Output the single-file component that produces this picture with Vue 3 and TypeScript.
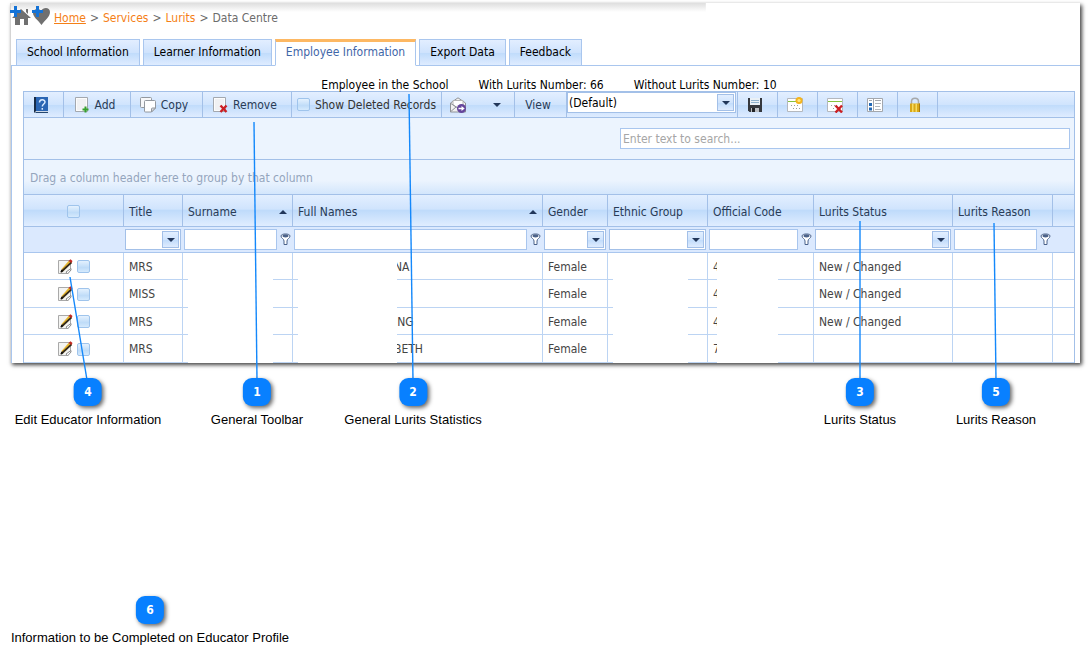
<script setup lang="ts">
import { ref } from 'vue'

interface Column {
  key: string
  label: string
  filter: 'text' | 'list' | 'none'
  sorted?: boolean
}
interface Employee {
  title: string
  nameTail: string
  gender: string
  code: string
  status: string
}
interface Callout {
  n: number
  label: string
  x: number
  y: number
  line?: [number, number, number, number]
}

const tabs = ['School Information', 'Learner Information', 'Employee Information', 'Export Data', 'Feedback']
const activeTab = ref('Employee Information')

const columns: Column[] = [
  { key: 'title', label: 'Title', filter: 'list' },
  { key: 'surname', label: 'Surname', filter: 'text', sorted: true },
  { key: 'names', label: 'Full Names', filter: 'text', sorted: true },
  { key: 'gender', label: 'Gender', filter: 'list' },
  { key: 'ethnic', label: 'Ethnic Group', filter: 'list' },
  { key: 'code', label: 'Official Code', filter: 'text' },
  { key: 'status', label: 'Lurits Status', filter: 'list' },
  { key: 'reason', label: 'Lurits Reason', filter: 'text' },
  { key: 'rest', label: '', filter: 'none' },
]

const employees: Employee[] = [
  { title: 'MRS', nameTail: 'NA', gender: 'Female', code: '4', status: 'New / Changed' },
  { title: 'MISS', nameTail: '', gender: 'Female', code: '4', status: 'New / Changed' },
  { title: 'MRS', nameTail: 'ING', gender: 'Female', code: '4', status: 'New / Changed' },
  { title: 'MRS', nameTail: 'BETH', gender: 'Female', code: '7', status: '' },
]

const callouts: Callout[] = [
  { n: 4, label: 'Edit Educator Information', x: 88, y: 378, line: [70, 277, 87, 380] },
  { n: 1, label: 'General Toolbar', x: 257, y: 378, line: [254, 122, 257, 380] },
  { n: 2, label: 'General Lurits Statistics', x: 413, y: 378, line: [409, 94, 413, 380] },
  { n: 3, label: 'Lurits Status', x: 860, y: 378, line: [860, 221, 860, 380] },
  { n: 5, label: 'Lurits Reason', x: 996, y: 378, line: [994, 223, 996, 380] },
  { n: 6, label: 'Information to be Completed on Educator Profile', x: 150, y: 596 },
]

const search = ref('')
const showDeleted = ref(false)
</script>

<template>
  <main class="page">
    <section class="frame">
      <nav class="crumbs" aria-label="Breadcrumb">
        <svg class="crumb-icon" width="22" height="21" viewBox="0 0 22 21" aria-hidden="true">
          <path d="M11 4 L21 13 H18 V20 H14 V14 H10 V20 H5 V13 H2 Z" fill="#707070" />
          <path d="M16 4h2v5l-2-2z" fill="#707070" />
          <path d="M4 1h3v4h4v3h-4v4h-3v-4h-4v-3h4z" fill="#1573d6" />
        </svg>
        <svg class="crumb-icon" width="20" height="21" viewBox="0 0 20 21" aria-hidden="true">
          <path d="M10 6 C12 2 19 2 19 7 C19 12 14 15 10.500 20 C7 15 2 12 2 8 C2 3 9 3 10 6Z" fill="#707070" />
          <path d="M5 1h3v4h4v3h-4v4h-3v-4h-4v-3h4z" fill="#1573d6" />
        </svg>
        <ol>
          <li><a class="home" href="#home">Home</a></li>
          <li><a href="#services">Services</a></li>
          <li><a href="#lurits">Lurits</a></li>
          <li>Data Centre</li>
        </ol>
      </nav>

      <div class="tabs" role="tablist">
        <button
          v-for="t in tabs"
          :key="t"
          type="button"
          role="tab"
          class="tab"
          :class="{ active: t === activeTab }"
          :aria-selected="t === activeTab"
          @click="activeTab = t"
        >{{ t }}</button>
      </div>

      <div class="pane">
        <div class="stats">
          <span>Employee in the School</span>
          <span>With Lurits Number: 66</span>
          <span>Without Lurits Number: 10</span>
        </div>

        <div class="grid">
          <div class="toolbar" role="toolbar" aria-label="General">
            <button type="button" class="tool w-icon" aria-label="Help">
              <svg width="16" height="16" viewBox="0 0 16 16">
                <path d="M1 0h14v15H1z" fill="#2b66b4" />
                <path d="M1 0h2v16H1z" fill="#182c48" />
                <path d="M3 14h12v2H1l2-2z" fill="#cfd9e6" />
                <path d="M3 15h12v1H2z" fill="#24466f" />
                <path d="M6.500 5.500c0-3.500 5.500-3.500 5.500-.5 0 2-2.700 2-2.700 4.500M9.300 11v1.800" fill="none" stroke="#dcecff" stroke-width="1.500" />
              </svg>
            </button>
            <button type="button" class="tool w-add">
              <svg width="16" height="16" viewBox="0 0 16 16" aria-hidden="true">
                <path d="M1.500 .5h12v14h-12z" fill="#fcfcfc" stroke="#a3a8af" />
                <path d="M3 2h9v11H3z" fill="#f0f1f3" />
                <path d="M10.500 9.500h2v2h2v2h-2v2h-2v-2h-2v-2h2z" fill="#35a02c" />
              </svg>
              <span>Add</span>
            </button>
            <button type="button" class="tool w-copy">
              <svg width="16" height="16" viewBox="0 0 16 16" aria-hidden="true">
                <path d="M1.500 .5h9q1 0 1 1v9h-10q-1 0-1-1v-8q0-1 1-1z" fill="#f7f8fa" stroke="#93989f" />
                <path d="M5.500 3.500h9q1 0 1 1V11l-4 4h-6q-1 0-1-1V4.500q0-1 1-1z" fill="#fff" stroke="#93989f" />
                <path d="M15.500 11h-3q-1 0-1 1v3z" fill="#d7dade" stroke="#93989f" />
              </svg>
              <span>Copy</span>
            </button>
            <button type="button" class="tool w-remove">
              <svg width="16" height="16" viewBox="0 0 16 16" aria-hidden="true">
                <path d="M1.500 .5h12v14h-12z" fill="#fcfcfc" stroke="#a3a8af" />
                <path d="M3 2h9v11H3z" fill="#f0f1f3" />
                <path d="M8.500 8.500l6 6.500M14.500 8.500l-6 6.500" stroke="#cb1f24" stroke-width="2.400" />
              </svg>
              <span>Remove</span>
            </button>
            <label class="tool w-show">
              <input v-model="showDeleted" type="checkbox" class="check" />
              <span>Show Deleted Records</span>
            </label>
            <button type="button" class="tool w-mail" aria-label="Export">
              <svg width="16" height="16" viewBox="0 0 16 16">
                <path d="M.5 6L8 .8 15.500 6v9H.5z" fill="#f1f1f1" stroke="#8e9196" />
                <path d="M3 3.500h10V9L8 11 3 8z" fill="#fff" stroke="#b5b5b5" />
                <path d="M.8 6.500L8 11M.8 14.500L6 10" stroke="#8e9196" fill="none" />
                <circle cx="11.500" cy="11.500" r="4.500" fill="#65459c" />
                <path d="M8.500 10.800h3V9l3.200 2.500-3.200 2.500v-1.700h-3z" fill="#fff" />
              </svg>
              <i class="caret"></i>
            </button>
            <label class="tool w-view" for="view-select">View</label>
            <div class="view-box">
              <span class="combo">
                <select id="view-select"><option>(Default)</option></select>
                <span class="drop"><i class="caret"></i></span>
              </span>
            </div>
            <button type="button" class="tool w-icon" aria-label="Save">
              <svg width="16" height="16" viewBox="0 0 16 16">
                <path d="M1 1h14v14H2.500L1 13.500z" fill="#35383e" />
                <path d="M3 1h10v7H3z" fill="#e9f0f6" />
                <path d="M4 3.500h8M4 5.500h8" stroke="#8fb1cc" />
                <path d="M4 11h8v4H4z" fill="#b9bdc2" />
                <path d="M5 11h3v4H5z" fill="#202226" />
              </svg>
            </button>
            <button type="button" class="tool w-icon" aria-label="New view">
              <svg width="16" height="16" viewBox="0 0 16 16">
                <path d="M.5 1.500h15v13H.5z" fill="#fff" stroke="#b4b8be" />
                <path d="M1 4.500h14" stroke="#86c440" />
                <path d="M4 8.500h9M6 11.500h7" stroke="#9a9da2" stroke-dasharray="1 2" />
                <circle cx="12" cy="3.500" r="3.500" fill="#f4b41d" />
                <circle cx="12" cy="3.500" r="1.600" fill="#ffe680" />
              </svg>
            </button>
            <button type="button" class="tool w-icon" aria-label="Delete view">
              <svg width="16" height="16" viewBox="0 0 16 16">
                <path d="M.5 1.500h15v13H.5z" fill="#fff" stroke="#b4b8be" />
                <path d="M1 4.500h14" stroke="#86c440" />
                <path d="M4 8.500h6M6 11.500h3" stroke="#9a9da2" stroke-dasharray="1 2" />
                <path d="M8.500 8.500l6.500 7M15 8.500l-6.500 7" stroke="#cb1f24" stroke-width="2.400" />
              </svg>
            </button>
            <button type="button" class="tool w-icon" aria-label="Choose columns">
              <svg width="16" height="16" viewBox="0 0 16 16">
                <path d="M.5 1.500h15v13H.5z" fill="#fff" stroke="#a3a7ad" />
                <path d="M6.500 2v12M2 3.500h3M8 3.500h6" stroke="#a3a7ad" />
                <path d="M2 6h3v3H2zM2 10.500h3v3H2z" fill="#2268b5" />
                <path d="M8 6.500h6M8 9.500h5M8 12.500h6" stroke="#b3b7bd" />
              </svg>
            </button>
            <button type="button" class="tool w-icon" aria-label="Lock">
              <svg width="16" height="16" viewBox="0 0 16 16">
                <path d="M4.500 7V4.500c0-4.500 7-4.500 7 0V7" fill="none" stroke="#a7a9ab" stroke-width="1.500" />
                <path d="M3 6.500h10V15H3z" fill="#d9a818" />
                <path d="M5 6.500h1.500V15H5zM8.500 6.500H10V15H8.500z" fill="#f6dc62" />
                <path d="M12 6.500h1V15h-1z" fill="#a97b0b" />
              </svg>
            </button>
          </div>

          <div class="search">
            <input v-model="search" type="text" placeholder="Enter text to search..." aria-label="Search" />
          </div>
          <div class="group">Drag a column header here to group by that column</div>

          <table>
            <colgroup>
              <col class="c-select" />
              <col v-for="c in columns" :key="c.key" :class="'c-' + c.key" />
            </colgroup>
            <thead>
              <tr class="head">
                <th class="pick"><span class="row-tools"><input type="checkbox" class="check" aria-label="Select all" /></span></th>
                <th v-for="c in columns" :key="c.key" scope="col">
                  <span class="th">{{ c.label }}<i v-if="c.sorted" class="sort"></i></span>
                </th>
              </tr>
              <tr class="filters">
                <td></td>
                <td v-for="c in columns" :key="c.key">
                  <span v-if="c.filter === 'list'" class="combo">
                    <select :aria-label="'Filter ' + c.label"><option></option></select>
                    <span class="drop"><i class="caret"></i></span>
                  </span>
                  <span v-else-if="c.filter === 'text'" class="text-filter">
                    <input type="text" :aria-label="'Filter ' + c.label" />
                    <svg width="15" height="14" viewBox="0 0 15 14" aria-hidden="true">
                      <path d="M4 3C4 .3 13 .3 13 3 13 5.500 10 5.500 10 8v3.500H7V8C7 5.500 4 5.500 4 3z" fill="#fff" stroke="#4b628a" />
                      <ellipse cx="8.500" cy="2.800" rx="3" ry="1.600" fill="#4b628a" />
                    </svg>
                  </span>
                </td>
              </tr>
            </thead>
            <tbody>
              <tr v-for="(e, i) in employees" :key="i">
                <td>
                  <span class="row-tools">
                    <button type="button" class="edit" aria-label="Edit">
                      <svg width="16" height="16" viewBox="0 0 16 16">
                        <path d="M.5 1.500h12V11L9 14.500H.5z" fill="#f4f4f2" stroke="#a9a9a9" />
                        <path d="M13 9.500v1.500l-3.500 4-1.500-2z" fill="#fff" stroke="#8b8b8b" />
                        <path d="M3 13L4 9.500 11 1.500 13.500 3.500 6 11.500z" fill="#e6b631" />
                        <path d="M3 13L13.500 3.300" stroke="#33291a" stroke-width="1.800" />
                        <path d="M10.500 2L12.500 .3 14.500 2 13.500 4z" fill="#c22a22" />
                        <path d="M2.500 13.500l1-3 2 1.500z" fill="#111" />
                      </svg>
                    </button>
                    <input type="checkbox" class="check" :aria-label="'Select row ' + (i + 1)" />
                  </span>
                </td>
                <td>{{ e.title }}</td>
                <td class="masked m-surname"></td>
                <td class="masked m-names"><span class="tail">{{ e.nameTail }}</span></td>
                <td>{{ e.gender }}</td>
                <td class="masked m-ethnic"></td>
                <td class="masked m-code">{{ e.code }}</td>
                <td>{{ e.status }}</td>
                <td></td>
                <td></td>
              </tr>
            </tbody>
          </table>
        </div>
      </div>
    </section>

    <svg class="lines" aria-hidden="true">
      <template v-for="c in callouts" :key="c.n">
        <line v-if="c.line" :x1="c.line[0]" :y1="c.line[1]" :x2="c.line[2]" :y2="c.line[3]" />
      </template>
    </svg>
    <div v-for="c in callouts" :key="c.n" class="callout" :style="{ left: c.x + 'px', top: c.y + 'px' }">
      <b>{{ c.n }}</b>
      <span>{{ c.label }}</span>
    </div>
  </main>
</template>

<style>
body {
  margin: 0;
  background: #fff;
}
</style>

<style scoped>
* {
  box-sizing: border-box;
}
.page {
  position: relative;
  min-height: 100vh;
  padding: 3px 8px 0 10px;
  overflow: hidden;
  font: 12px/16px "DejaVu Sans Condensed", "Noto Sans", sans-serif;
  color: #000;
}
button,
input,
select {
  font: inherit;
  color: inherit;
  margin: 0;
  border-radius: 0;
}
.frame {
  border-left: 1px solid #d4d4d4;
  background: #fff;
  box-shadow: 2px 2px 4px rgba(0, 0, 0, 0.75);
}
.crumbs {
  display: flex;
  height: 36px;
  color: #6c6c6c;
  background: linear-gradient(#dedede, rgba(255, 255, 255, 0) 9px) no-repeat 0 0 / 65% 100%;
}
.crumb-icon {
  margin: 2px 0 0 -1px;
}
.crumbs ol {
  display: flex;
  margin: 7px 0 0 3px;
  padding: 0;
  list-style: none;
}
.crumbs li + li::before {
  content: ">";
  margin: 0 4px;
}
.crumbs a {
  color: #f57f17;
  text-decoration: none;
}
.crumbs a.home {
  text-decoration: underline;
}
.tabs {
  display: flex;
  gap: 3px;
  height: 27px;
  margin: 0 0 -1px 5px;
  position: relative;
}
.tab {
  height: 27px;
  padding: 0 10px 2px;
  border: 1px solid #a9c6ee;
  background: linear-gradient(#e2eeff, #cfe3fd 50%, #bfdbfb 51%, #dfecff);
  white-space: nowrap;
}
.tab.active {
  border-top: 3px solid #fdb863;
  border-bottom-color: #fff;
  padding-bottom: 3px;
  background: #fff;
  color: #3f66a8;
}
.pane {
  padding: 12px 5px 0 11px;
  border: solid #a9c6ee;
  border-width: 1px 0 0 1px;
}
.stats {
  display: flex;
  justify-content: center;
  gap: 30px;
  height: 13px;
  line-height: 15px;
}
.grid {
  border: 1px solid #a3c0e8;
  border-bottom: 0;
}
.toolbar {
  display: flex;
  height: 26px;
  border-bottom: 1px solid #a3c0e8;
  background: linear-gradient(#e3efff, #d0e4fd 50%, #bfdbfb 51%, #dfecff);
  color: #283b56;
}
.tool {
  display: flex;
  align-items: center;
  justify-content: center;
  gap: 5px;
  flex: none;
  padding: 0 5px 0 0;
  border: 0;
  border-right: 1px solid #a3c0e8;
  background: none;
  white-space: nowrap;
}
.tool svg {
  flex: none;
}
.w-icon {
  width: 40px;
}
.w-add {
  width: 67px;
}
.w-copy {
  width: 72px;
}
.w-remove {
  width: 89px;
}
.w-show {
  width: 150px;
  padding: 0;
  color: #333;
}
.w-mail {
  width: 73px;
  gap: 27px;
}
.w-view {
  width: 52px;
}
.view-box {
  width: 171px;
  padding-right: 1px;
  border-right: 1px solid #a3c0e8;
}
.combo {
  display: flex;
  position: relative;
  height: 21px;
  border: 1px solid #a3c0e8;
  background: #fff;
}
.combo select {
  appearance: none;
  flex: 1;
  min-width: 0;
  padding: 1px 20px 0 1px;
  border: 0;
  background: none;
  color: #000;
}
.drop {
  position: absolute;
  top: 1px;
  right: 1px;
  bottom: 1px;
  display: grid;
  place-items: center;
  width: 17px;
  border: 1px solid #a3c0e8;
  background: linear-gradient(#e3efff, #d0e4fd 50%, #bfdbfb 51%, #dfecff);
  pointer-events: none;
}
.caret {
  border: 4px solid transparent;
  border-top-color: #22375a;
  border-bottom: 0;
}
.check {
  appearance: none;
  flex: none;
  width: 13px;
  height: 13px;
  border: 1px solid #9fc4ec;
  border-radius: 2px;
  background: linear-gradient(#e4f1fe, #bfdcf8 60%, #d5eafd);
}
.search {
  display: flex;
  justify-content: flex-end;
  padding: 10px 4px;
  border-bottom: 1px solid #a3c0e8;
  background: #ecf4fe;
}
.search input {
  width: 450px;
  height: 21px;
  padding: 1px 2px 0;
  border: 1px solid #a9c6ee;
  background: #fff;
}
.search input::placeholder {
  color: #a6a6a6;
  opacity: 1;
}
.group {
  height: 34px;
  padding: 10px 6px 8px;
  background: linear-gradient(#ecf4fe 60%, #d3e6fc);
  color: #94a5bd;
}
table {
  width: 100%;
  table-layout: fixed;
  border-spacing: 0;
  color: #444;
}
.c-select { width: 100px; }
.c-title { width: 59px; }
.c-surname { width: 110px; }
.c-gender { width: 65px; }
.c-ethnic { width: 100px; }
.c-code { width: 106px; }
.c-status { width: 139px; }
.c-reason { width: 100px; }
.c-rest { width: 21px; }
th,
td {
  position: relative;
  height: 27px;
  padding: 1px 5px 0;
  border-right: 1px solid #bcd4f3;
  border-bottom: 1px solid #bcd4f3;
  font-weight: normal;
  text-align: left;
  white-space: nowrap;
}
tbody tr:nth-child(even) td {
  height: 28px;
}
th:last-child,
td:last-child {
  border-right: 0;
}
.head th {
  height: 33px;
  padding: 2px 5px 0;
  border: solid #a3c0e8;
  border-width: 1px 1px 1px 0;
  background: linear-gradient(#e3efff, #d0e4fd 45%, #bfdbfb 50%, #e0edff);
  color: #283b56;
}
.head th:last-child {
  border-right: 0;
}
.th {
  display: flex;
  align-items: center;
  justify-content: space-between;
}
.sort {
  border: 4px solid transparent;
  border-bottom-color: #22375a;
  border-top: 0;
}
.filters td {
  height: 26px;
  padding: 0 1px;
  border-right: 0;
  border-bottom-color: #a9c6ee;
  background: #dbe9fe;
}
.filters .combo {
  margin-right: 1px;
}
.text-filter {
  display: flex;
  align-items: center;
}
.text-filter input {
  flex: 1;
  min-width: 0;
  height: 21px;
  padding: 0 2px;
  border: 1px solid #a9c6ee;
  background: #fff;
}
.row-tools {
  display: flex;
  align-items: center;
  justify-content: center;
  gap: 3px;
}
.edit {
  display: flex;
  padding: 0;
  border: 0;
  background: none;
}
.masked::after {
  content: "";
  position: absolute;
  top: 0;
  bottom: -1px;
  left: 5px;
  background: #fff;
}
.m-surname::after { width: 85px; }
.m-names::after { width: 99px; }
.m-ethnic::after { width: 75px; }
.m-code::after { left: 9px; width: 61px; }
.tail {
  padding-left: 96px;
}
.lines {
  position: absolute;
  top: 0;
  left: 0;
  width: 100%;
  height: 100%;
  pointer-events: none;
}
.lines line {
  stroke: #1488fb;
  stroke-width: 1.4;
}
.callout {
  position: absolute;
  display: flex;
  flex-direction: column;
  align-items: center;
  gap: 6px;
  width: max-content;
  transform: translateX(-50%);
  font: 13px/16px "Liberation Sans", Arial, sans-serif;
}
.callout b {
  width: 28px;
  height: 28px;
  border-radius: 9px;
  background: #0880ff;
  box-shadow: 2px 2px 4px rgba(0, 0, 0, 0.6);
  color: #fff;
  font: bold 12px/28px "DejaVu Sans Condensed", sans-serif;
  text-align: center;
}
</style>
